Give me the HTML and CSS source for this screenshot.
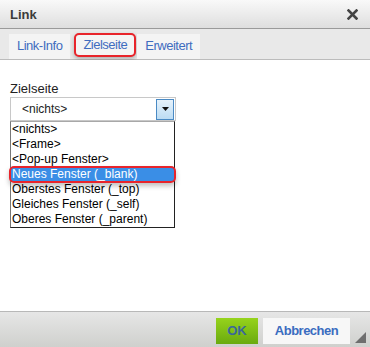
FILE: index.html
```html
<!DOCTYPE html>
<html lang="de">
<head>
    <meta charset="UTF-8">
    <title>Link</title>
    <link rel="stylesheet" href="styles.css">
</head>
<body>
    <div class="dialog">
        <div class="titlebar">
            <span class="title">Link</span>
            <svg class="close" width="11" height="11" viewBox="0 0 11 11">
                <path d="M1.5 1.5 L9.5 9.5 M9.5 1.5 L1.5 9.5" stroke="#444" stroke-width="2.6" stroke-linecap="square"/>
            </svg>
        </div>

        <div class="tabs">
            <div class="tab">Link-Info</div>
            <div class="tab tab-active">Zielseite</div>
            <div class="tab">Erweitert</div>
        </div>

        <div class="content">
            <label class="field-label">Zielseite</label>
            <div class="select">
                <span class="select-value">&lt;nichts&gt;</span>
                <span class="select-button">
                    <svg width="7" height="4" viewBox="0 0 7 4"><path d="M0 0 H7 L3.5 4 Z" fill="#111"/></svg>
                </span>
            </div>
            <ul class="options">
                <li>&lt;nichts&gt;</li>
                <li>&lt;Frame&gt;</li>
                <li>&lt;Pop-up Fenster&gt;</li>
                <li class="selected">Neues Fenster (_blank)</li>
                <li>Oberstes Fenster (_top)</li>
                <li>Gleiches Fenster (_self)</li>
                <li>Oberes Fenster (_parent)</li>
            </ul>
        </div>

        <div class="footer">
            <button class="btn btn-ok">OK</button>
            <button class="btn btn-cancel">Abbrechen</button>
            <span class="grip"></span>
        </div>
    </div>
</body>
</html>
```

FILE: styles.css
```css
body {
    margin: 0;
    font-family: "Liberation Sans", Arial, sans-serif;
    font-size: 13px;
    color: #000;
    background: #fff;
}

.dialog {
    width: 370px;
    height: 347px;
    display: flex;
    flex-direction: column;
    overflow: hidden;
}

.titlebar {
    height: 28px;
    display: flex;
    align-items: center;
    justify-content: space-between;
    padding: 0 12px 0 10px;
    background: linear-gradient(#f9f9f9, #dedede);
    border-bottom: 1px solid #9a9a9a;
    flex-shrink: 0;
}

.title {
    font-weight: bold;
    font-size: 13px;
    color: #3b3b3b;
}

.close {
    display: block;
}

.tabs {
    height: 30px;
    display: flex;
    align-items: flex-end;
    gap: 4px;
    padding-left: 9px;
    background: #e9e9e9;
    border-bottom: 1px solid #bcbcbc;
    flex-shrink: 0;
}

.tab {
    height: 25px;
    line-height: 23px;
    padding: 0 8px;
    background: #f4f4f4;
    color: #3f6cbf;
    font-size: 13px;
    letter-spacing: -0.5px;
}

.tab-active {
    border: 2px solid #e8242b;
    border-radius: 5px;
    height: 20px;
    line-height: 20px;
    padding: 0 7px;
    margin-bottom: 2px;
    margin-right: -3px;
    box-shadow: 0 2px 4px rgba(0, 0, 0, 0.25);
}

.content {
    flex: 1;
    padding: 21px 0 0 10px;
    background: #fff;
}

.field-label {
    display: block;
    height: 16px;
    color: #222;
}

.select {
    width: 164px;
    height: 22px;
    border: 1px solid #c8c8c8;
    display: flex;
    align-items: center;
    justify-content: space-between;
}

.select-value {
    padding-left: 11px;
    color: #222;
    font-size: 12px;
}

.select-button {
    width: 16px;
    height: 19px;
    margin-right: 1px;
    border: 1px solid #4a8ac4;
    background: linear-gradient(#e6f2fb, #bcdcf3);
    display: flex;
    align-items: center;
    justify-content: center;
}

.options {
    list-style: none;
    margin: 0;
    padding: 0;
    width: 163px;
    border: 1px solid #222;
    border-top-color: #a8a8a8;
    border-left-color: #777;
    font-size: 12px;
}

.options li {
    height: 14px;
    line-height: 14px;
    padding: 0 0 1px 1px;
    white-space: nowrap;
}

.options li.selected {
    background: #3a8ee6;
    color: #fff;
    position: relative;
}

.options li.selected::after {
    content: "";
    position: absolute;
    left: -2px;
    right: -2px;
    top: -1px;
    bottom: -1px;
    border: 2px solid #e8242b;
    border-radius: 5px;
    box-shadow: 0 3px 5px rgba(0, 0, 0, 0.25);
}

.footer {
    height: 35px;
    border-top: 1px solid #b8b8b8;
    background: linear-gradient(#e6e6e6, #cfd0cd);
    display: flex;
    align-items: center;
    justify-content: flex-end;
    gap: 5px;
    padding-right: 20px;
    position: relative;
    flex-shrink: 0;
}

.btn {
    height: 26px;
    border: none;
    font-family: "Liberation Sans", Arial, sans-serif;
    font-size: 13px;
    font-weight: bold;
    padding: 0;
    margin-top: 2px;
}

.btn-ok {
    width: 42px;
    background: linear-gradient(#96d31c, #6aaa0f);
    color: #3a689a;
}

.btn-cancel {
    width: 87px;
    background: #f7f7f7;
    color: #3a6cc0;
    letter-spacing: -0.5px;
}

.grip {
    position: absolute;
    right: 4px;
    bottom: 4px;
    width: 0;
    height: 0;
    border-left: 11px solid transparent;
    border-bottom: 11px solid #6e6e6e;
}
```
